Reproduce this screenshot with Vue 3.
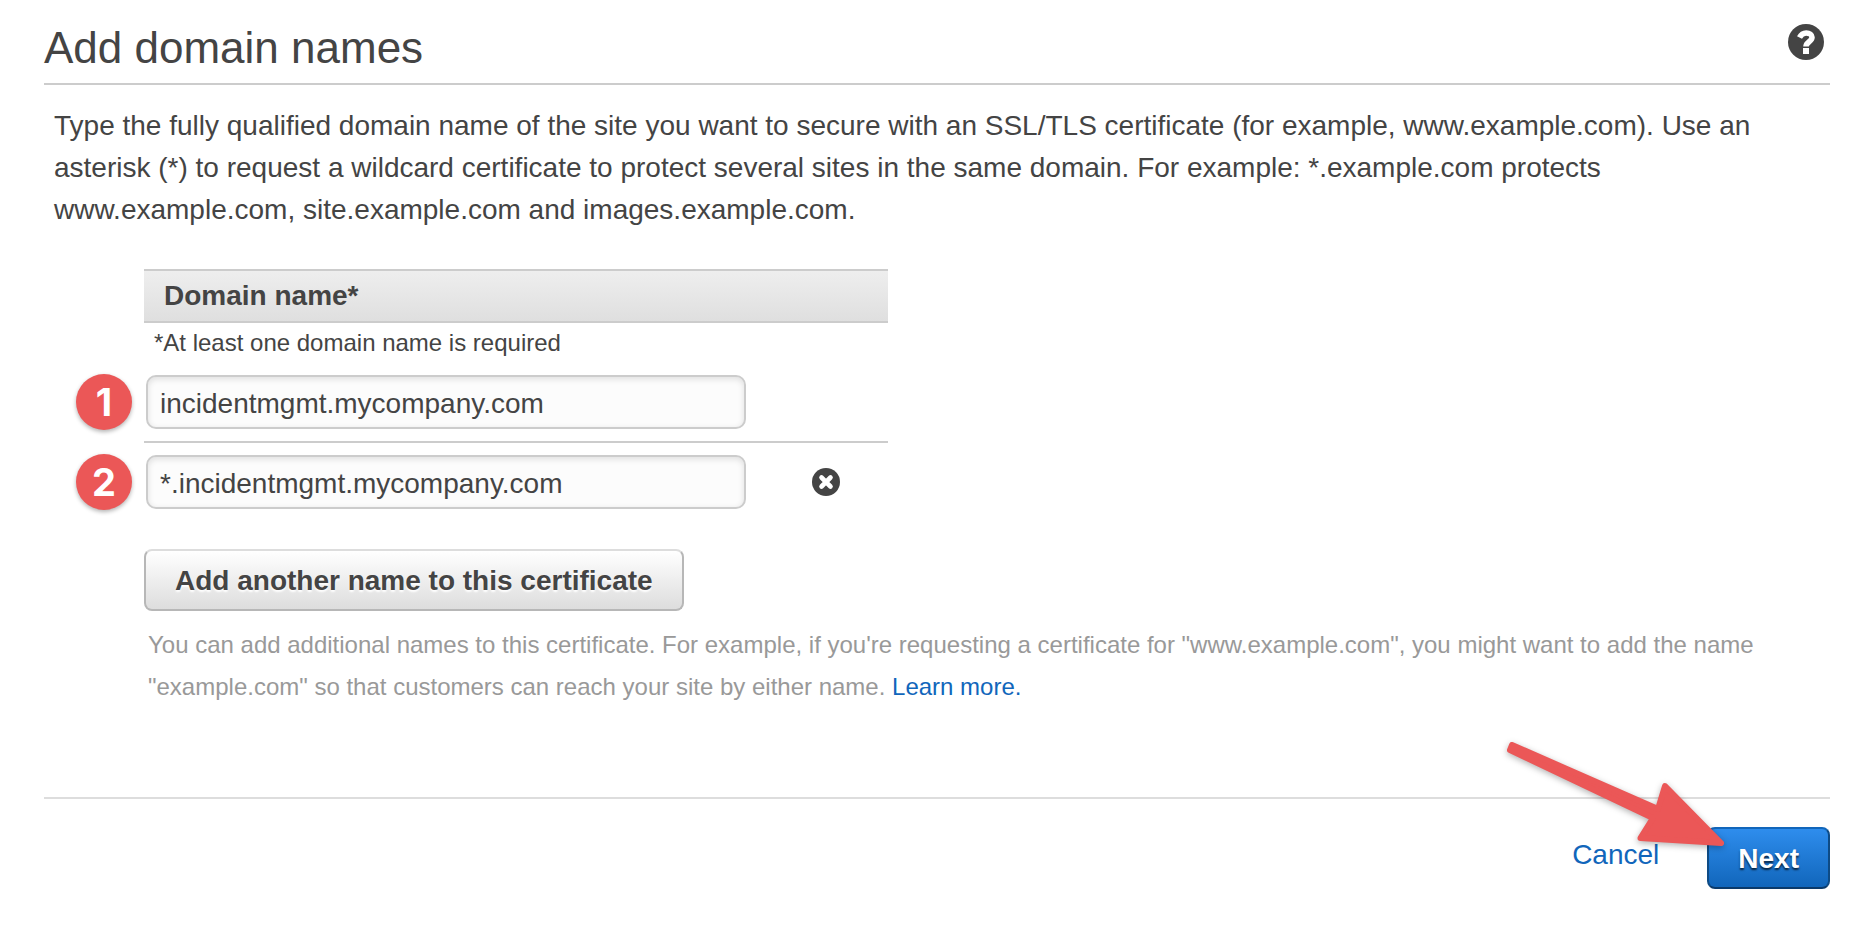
<template>
  <div class="page">
    <header class="page-header">
      <h1>Add domain names</h1>
      <button class="icon-button" type="button" aria-label="Help">
        <svg width="36" height="36" viewBox="0 0 36 36">
          <circle cx="18" cy="18" r="18" fill="#444" />
          <path
            d="M11.5 13.5C13 10.6 15.2 9 18.2 9c3.4 0 5.8 1.7 5.8 4.3 0 4.4-6 4.4-6 9.200"
            fill="none"
            stroke="#fff"
            stroke-width="5.6"
          />
          <rect x="15" y="24" width="6" height="6" fill="#fff" />
        </svg>
      </button>
    </header>

    <p class="intro">
      Type the fully qualified domain name of the site you want to secure with an SSL/TLS
      certificate (for example, www.example.com). Use an asterisk (*) to request a wildcard
      certificate to protect several sites in the same domain. For example: *.example.com protects
      www.example.com, site.example.com and images.example.com.
    </p>

    <form id="domain-form" class="domains" @submit.prevent>
      <table>
        <thead>
          <tr>
            <th id="domain-heading" colspan="2">Domain name*</th>
          </tr>
        </thead>
        <tbody>
          <tr>
            <td class="note" colspan="2">*At least one domain name is required</td>
          </tr>
          <tr v-for="(domain, index) in domains" :key="domain.id" class="domain-row">
            <td class="field">
              <span class="step">{{ index + 1 }}</span>
              <input v-model="domain.name" type="text" aria-labelledby="domain-heading" />
            </td>
            <td class="remove">
              <button
                v-if="index > 0"
                class="icon-button"
                type="button"
                aria-label="Remove"
                @click="removeDomain(index)"
              >
                <svg width="28" height="28" viewBox="0 0 28 28">
                  <circle cx="14" cy="14" r="14" fill="#444" />
                  <path
                    d="M9.5 9.5l9 9M18.5 9.5l-9 9"
                    stroke="#fff"
                    stroke-width="4.6"
                    stroke-linecap="round"
                  />
                </svg>
              </button>
            </td>
          </tr>
        </tbody>
      </table>
      <button class="button" type="button" @click="addDomain">
        Add another name to this certificate
      </button>
      <p class="hint">
        You can add additional names to this certificate. For example, if you're requesting a
        certificate for "www.example.com", you might want to add the name "example.com" so that
        customers can reach your site by either name. <a href="#">Learn more.</a>
      </p>
    </form>

    <footer class="page-footer">
      <a class="cancel" href="#">Cancel</a>
      <button class="button primary" type="submit" form="domain-form">Next</button>
      <svg class="arrow" width="270" height="150" viewBox="0 0 270 150">
        <path
          d="M32 26L178 90L185 67L241 124L160.5 119L173 99L30 31Z"
          fill="#eb5757"
          stroke="#eb5757"
          stroke-width="6"
          stroke-linejoin="round"
        />
      </svg>
    </footer>
  </div>
</template>

<script setup>
import { ref } from 'vue'

const domains = ref([
  { id: 1, name: 'incidentmgmt.mycompany.com' },
  { id: 2, name: '*.incidentmgmt.mycompany.com' },
])
let nextId = 3

function addDomain() {
  domains.value.push({ id: nextId++, name: '' })
}

function removeDomain(index) {
  domains.value.splice(index, 1)
}
</script>

<style>
body {
  margin: 0;
  background: #fff;
}
</style>

<style scoped>
.page {
  padding: 24px 46px 48px 44px;
  font-family: 'Helvetica Neue', 'Liberation Sans', Arial, sans-serif;
  font-size: 28px;
  color: #444;
}
.page-header {
  display: flex;
  justify-content: space-between;
  align-items: flex-start;
  padding: 0 6px 11px 0;
  border-bottom: 2px solid #ccc;
}
h1 {
  margin: 0;
  font-size: 44px;
  font-weight: normal;
  line-height: 48px;
}
a {
  color: #1166bb;
  text-decoration: none;
}
.icon-button {
  display: block;
  padding: 0;
  border: 0;
  background: none;
  cursor: pointer;
}
.icon-button svg {
  display: block;
}
.intro {
  margin: 20px 10px 38px;
  line-height: 42px;
}
.domains {
  margin-left: 100px;
}
table {
  width: 744px;
  max-width: 100%;
  border-spacing: 0;
}
th {
  padding: 0 20px;
  border-top: 2px solid #ccc;
  border-bottom: 2px solid #ccc;
  background: linear-gradient(#eee, #dfdfdf);
  line-height: 50px;
  text-align: left;
}
.note {
  padding: 2px 10px;
  font-size: 24px;
  line-height: 36px;
}
.domain-row td {
  padding: 12px 0;
}
.domain-row + .domain-row td {
  border-top: 2px solid #ccc;
}
.domain-row .field {
  position: relative;
  width: 600px;
  padding-left: 2px;
}
.domain-row .remove {
  padding-left: 66px;
}
input {
  display: block;
  box-sizing: border-box;
  width: 100%;
  height: 54px;
  padding: 4px 12px 0;
  border: 2px solid #ccc;
  border-radius: 10px;
  background: #fcfcfc;
  box-shadow: inset 0 2px 6px rgba(0, 0, 0, 0.12);
  font: inherit;
  color: inherit;
}
.step {
  position: absolute;
  top: 50%;
  left: -68px;
  width: 56px;
  border-radius: 50%;
  background: #eb5757;
  box-shadow: 0 2px 4px rgba(0, 0, 0, 0.3);
  font-family: Inter, sans-serif;
  font-size: 38px;
  font-weight: bold;
  line-height: 56px;
  text-align: center;
  color: #fff;
  transform: translateY(-50%);
}
.button {
  display: block;
  box-sizing: border-box;
  height: 62px;
  padding: 2px 29px 0;
  border: 2px solid #b7b7b7;
  border-top-color: #ddd;
  border-radius: 8px;
  background: linear-gradient(#fff, #ddd);
  font: inherit;
  font-weight: bold;
  color: #444;
  text-shadow: 0 2px 2px #fff;
  cursor: pointer;
}
.domains .button {
  margin-top: 28px;
}
.hint {
  margin: 13px 4px 0;
  font-size: 24px;
  line-height: 42px;
  color: #999;
}
.page-footer {
  position: relative;
  display: flex;
  justify-content: flex-end;
  align-items: flex-start;
  gap: 48px;
  margin-top: 89px;
  padding-top: 28px;
  border-top: 2px solid #ddd;
}
.cancel {
  line-height: 56px;
}
.button.primary {
  border-color: #1166bb #0e4b85 #0a3a6b;
  background: linear-gradient(#2e8ded, #1166bb);
  color: #fff;
  text-shadow: 0 2px 2px rgba(0, 0, 0, 0.7);
}
.arrow {
  position: absolute;
  top: -80px;
  right: 80px;
  filter: drop-shadow(0 2px 3px rgba(0, 0, 0, 0.3));
  pointer-events: none;
}
</style>
